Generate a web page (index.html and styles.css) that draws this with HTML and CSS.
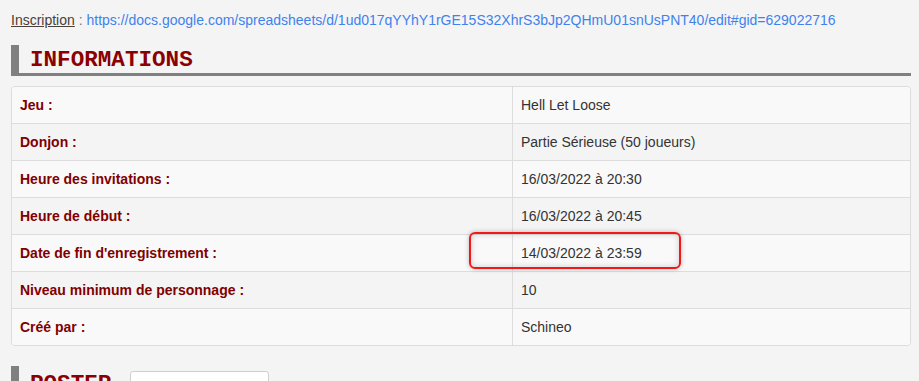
FILE: index.html
```html
<!DOCTYPE html>
<html lang="fr">
<head>
<meta charset="utf-8">
<link rel="stylesheet" href="styles.css">
</head>
<body>
<div class="page">
  <p class="signup"><span class="signup-label">Inscription</span> <span class="colon">:</span> <a class="signup-link" href="#">https://docs.google.com/spreadsheets/d/1ud017qYYhY1rGE15S32XhrS3bJp2QHmU01snUsPNT40/edit#gid=629022716</a></p>

  <h2 class="section-title"><span>INFORMATIONS</span></h2>

  <div class="info-box">
    <table class="info-table">
      <tbody>
        <tr><th>Jeu :</th><td>Hell Let Loose</td></tr>
        <tr><th>Donjon :</th><td>Partie Sérieuse (50 joueurs)</td></tr>
        <tr><th>Heure des invitations :</th><td>16/03/2022 à 20:30</td></tr>
        <tr><th>Heure de début :</th><td>16/03/2022 à 20:45</td></tr>
        <tr><th>Date de fin d'enregistrement :</th><td><span class="highlight-wrap">14/03/2022 à 23:59<span class="highlight"></span></span></td></tr>
        <tr><th>Niveau minimum de personnage :</th><td>10</td></tr>
        <tr><th>Créé par :</th><td>Schineo</td></tr>
      </tbody>
    </table>
  </div>

  <div class="roster-head">
    <h2 class="section-title roster-title"><span>ROSTER</span></h2>
    <button class="roster-btn">+ Supprimer l'inscription</button>
  </div>
</div>
</body>
</html>
```

FILE: styles.css
```css
html, body {
  margin: 0;
  padding: 0;
  background: #f4f4f4;
  overflow: hidden;
}

.page {
  padding: 10px 8px 0 11px;
  font-family: "Liberation Sans", Arial, sans-serif;
  font-size: 14px;
  color: #333;
}

.signup {
  margin: 0;
  line-height: 20px;
  height: 20px;
}

.signup-label {
  color: #4a4038;
  text-decoration: underline;
}

.colon {
  color: #777;
}

.signup-link {
  color: #3f82ec;
  text-decoration: none;
}

.section-title {
  margin: 15px 0 0 0;
  height: 28px;
  border-left: 8px solid #808080;
  border-bottom: 3px solid #808080;
  padding-left: 11px;
  font-family: "Liberation Mono", "DejaVu Sans Mono", monospace;
  font-weight: bold;
  font-size: 22.6px;
  line-height: 28px;
  color: #8b0000;
  letter-spacing: 0;
}

.section-title span {
  position: relative;
  top: 1px;
}

.info-box {
  margin-top: 10px;
  border: 1px solid #dcdcdc;
  border-radius: 4px;
  overflow: hidden;
  background: #f9f9f9;
}

.info-table {
  width: 100%;
  border-collapse: collapse;
}

.info-table tr {
  height: 37px;
}

.info-table tr:first-child {
  height: 36px;
}

.info-table tr:nth-child(odd) {
  background: #f9f9f9;
}

.info-table tr:nth-child(even) {
  background: #f4f4f4;
}

.info-table tr + tr th,
.info-table tr + tr td {
  border-top: 1px solid #dddddd;
}

.info-table th,
.info-table td {
  padding: 0 8px;
  text-align: left;
  vertical-align: middle;
  line-height: 20px;
}

.info-table th {
  width: 484px;
  color: #800000;
  font-weight: bold;
  border-right: 1px solid #dddddd;
}

.info-table td {
  color: #333;
}

.highlight-wrap {
  position: relative;
}

.highlight {
  position: absolute;
  left: -52px;
  top: -13px;
  width: 208px;
  height: 33px;
  border: 2px solid #f01818;
  border-radius: 6px;
  box-shadow: 0 0 5px rgba(0, 0, 0, 0.25), inset 0 0 6px rgba(0, 0, 0, 0.18);
}

.roster-head {
  display: flex;
  align-items: flex-start;
  margin-top: 20px;
}

.roster-title {
  margin: 0;
  border-bottom: none;
  height: 30px;
  width: 90px;
  flex: none;
  padding-top: 3px;
}

.roster-btn {
  margin: 5px 0 0 10px;
  width: 139px;
  height: 30px;
  background: #fff;
  border: 1px solid #cfcfcf;
  border-radius: 3px;
  font-family: "Liberation Sans", Arial, sans-serif;
  font-size: 12px;
  color: #333;
  padding: 0;
}
```
